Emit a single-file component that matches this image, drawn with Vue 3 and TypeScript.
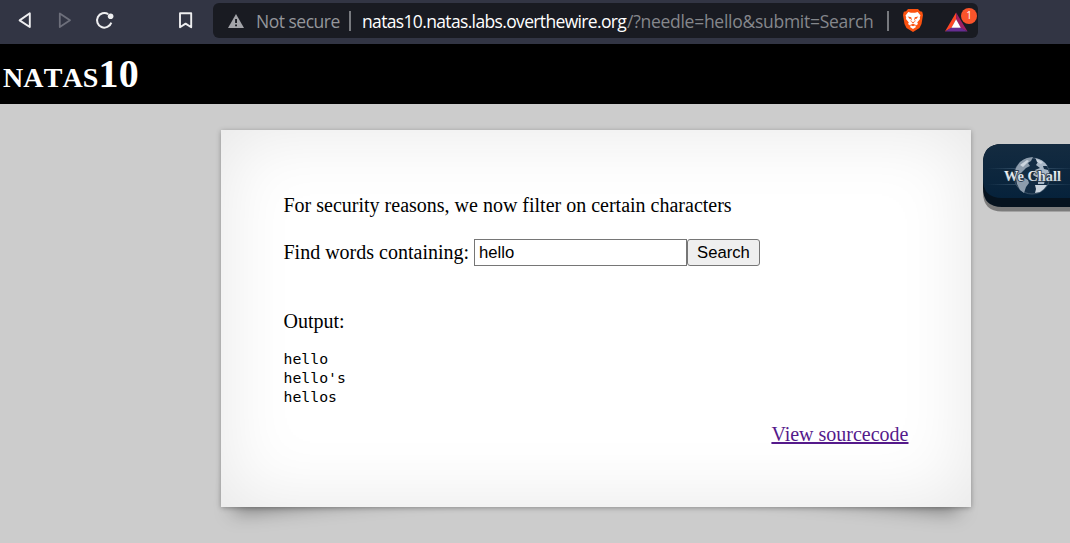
<script setup lang="ts">
import { ref } from 'vue'

const needle = ref('hello')
const results: string[] = ['hello', "hello's", 'hellos']
</script>

<template>
  <div class="window">
    <header class="toolbar">
      <svg class="nav" width="213" height="44" viewBox="0 0 213 44" fill="none">
        <path d="M29.8 13.2 V27 L19.6 20.4 Z" stroke="#eeeef0" stroke-width="1.9" stroke-linejoin="round" />
        <path d="M59.8 13.4 V27 L70 20.3 Z" stroke="#6d6f7b" stroke-width="1.8" stroke-linejoin="round" />
        <path d="M108.2 14.1 A7.3 7.3 0 1 0 111.3 22.6" stroke="#eeeef0" stroke-width="2" />
        <circle cx="110.6" cy="16.2" r="2.8" fill="#eeeef0" />
        <path d="M180 13.2 H191.2 V27.2 L185.6 23.6 L180 27.2 Z" stroke="#eeeef0" stroke-width="1.9" stroke-linejoin="round" />
      </svg>
      <div class="address">
        <svg class="warn" width="16" height="14" viewBox="0 0 16 14">
          <path d="M8 0 L16 14 H0 Z" fill="#a3a4a9" />
          <path d="M7.1 5 h1.9 v4 h-1.9z M7.1 10.5 h1.9 v1.7 h-1.9z" fill="#191b22" />
        </svg>
        <span class="insecure">Not secure</span>
        <i class="bar"></i>
        <span class="host">natas10.natas.labs.overthewire.org</span>
        <span class="query">/?needle=hello&amp;submit=Search</span>
        <i class="bar second"></i>
        <svg class="lion" width="20" height="23" viewBox="0 0 20 23">
          <path d="M5 0 H15 L17 2.2 L19.2 2.8 L20 6 L18.5 15 L16.5 19 L10 23 L3.5 19 L1.5 15 L0 6 L.8 2.8 L3 2.2Z" fill="#fb5210" />
          <path d="M5.3 3.1 L8 3.8 H12 L14.7 3.1 L17.5 6.5 L16.8 8.3 L17 10 L14.2 13.6 L15 15 L13 16.4 L11.8 16 L13 18 L10 20 L7 18 L8.2 16 L7 16.4 L5 15 L5.8 13.6 L3 10 L3.2 8.3 L2.5 6.5Z" fill="#fff" />
          <path d="M4.7 7.6 L8.2 8.3 L8.8 10.2 L8 12 L10 13.3 L12 12 L11.2 10.2 L11.8 8.3 L15.3 7.6 L13.2 10 L11.8 9.7 L12.5 12.1 L10 14.5 L7.5 12.1 L8.2 9.7 L6.8 10Z M7 16 L10 14.7 L13 16 L10 17.2Z" fill="#fb5210" />
        </svg>
        <span class="bat">
          <svg width="23" height="20" viewBox="0 0 24 20">
            <path d="M11.6 0 L0 20 L6.7 16.2 L11.6 7Z" fill="#ff4724" />
            <path d="M11.6 0 L23.5 20 L16.3 16.2 L11.6 7Z" fill="#9e1f63" />
            <path d="M0 20 H23.5 L16.3 15.7 H6.7Z" fill="#662d91" />
            <path d="M11.6 7 L16.5 16 H6.7Z" fill="#fff" />
          </svg>
          <b class="badge">1</b>
        </span>
      </div>
    </header>

    <h1>natas10</h1>

    <main>
      <section class="content">
        <p class="notice">For security reasons, we now filter on certain characters</p>
        <form class="search" @submit.prevent>
          <label for="needle">Find words containing:</label>
          <input id="needle" v-model="needle" type="text" />
          <button type="submit">Search</button>
        </form>
        <p class="output">Output:</p>
        <pre><span v-for="word in results" :key="word">{{ word }}</span></pre>
        <div class="source"><a href="#">View sourcecode</a></div>
      </section>
      <aside class="wechall">
        <svg width="88" height="68" viewBox="0 0 88 68">
          <defs>
            <linearGradient id="panel" x1="0" y1="0" x2="0" y2="1">
              <stop offset="0" stop-color="#142b40" />
              <stop offset="1" stop-color="#06223b" />
            </linearGradient>
            <linearGradient id="glow" x1="0" y1="0" x2="1" y2="0">
              <stop offset="0" stop-color="#54718a" stop-opacity="0" />
              <stop offset=".5" stop-color="#54718a" stop-opacity=".7" />
              <stop offset="1" stop-color="#54718a" stop-opacity=".1" />
            </linearGradient>
            <linearGradient id="letters" x1="0" y1="0" x2="0" y2="1">
              <stop offset="0" stop-color="#ffffff" />
              <stop offset="1" stop-color="#b9c6d2" />
            </linearGradient>
          </defs>
          <path d="M88 4 H20 Q1 4 1 23 V48 Q1 67.5 20 67.5 H88Z" fill="#7c7c7c" />
          <path d="M88 0 H20 Q1 0 1 19 V44 Q1 63 20 63 H88Z" fill="#06131f" />
          <path d="M88 0 H20 Q1 0 1 19 V35 Q1 54 20 54 H88Z" fill="url(#panel)" />
          <path d="M5 24 H88 V25 H5Z M5 40 H88 V41 H5Z" fill="url(#glow)" />
          <circle cx="50" cy="32" r="18" fill="#132c44" stroke="#4a6074" stroke-width=".8" />
          <path d="M34 24 Q38 16 45 14 L51 13 L49 17 L46 19 L48 22 L44 24 L41 27 L38 30 L41 33 L46 36 L47 39 L44 43 L42 49 L38 46 L35 40 L34 34 L32.5 29Z" fill="#8d9cac" />
          <path d="M53 14 Q61 15 65.5 22 L61 22 L62 25 L66 26 L68 31 L67 38 L63 36 L62 40 L56 40 L56 34 L51 31 L53 26 L58 24 L54 21 L56 18Z" fill="#a9b7c6" />
          <path d="M38 21 L45 16 L47 17 L41 23Z M54 15 L61 18 L59 20 L55 18Z" fill="#ccd5df" />
          <path d="M53 41 H65 Q62 46 58 48 L53 49 L54 45Z" fill="#ccd5df" />
          <text x="22" y="36.5" class="brand" textLength="57" lengthAdjust="spacingAndGlyphs">We Chall</text>
        </svg>
      </aside>
    </main>
  </div>
</template>

<style>
body { margin: 0; background: #ccc; overflow: hidden; }
</style>

<style scoped>
.window { width: 1070px; height: 543px; overflow: hidden; background: #ccc; font: 20px/23px "Liberation Serif", serif; color: #000; }
.toolbar { height: 44px; background: #323544; display: flex; align-items: flex-start; }
.nav { flex: none; }
.address { box-sizing: border-box; width: 765px; height: 35px; margin-top: 3px; border-radius: 6px; background: #191b22; display: flex; align-items: center; padding-left: 15px; font: 17.5px/35px "Open Sans", sans-serif; white-space: nowrap; }
.address > * { flex: none; }
.address > span:not(.bat) { padding-top: 1px; }
.warn { margin: 1px 12px 0 0; }
.insecure { width: 93px; color: #94969b; letter-spacing: -.5px; }
.bar { width: 2px; height: 20px; background: #77797e; }
.host { width: 265px; margin-left: 11px; color: #fff; letter-spacing: -.65px; }
.query { width: 246px; color: #85878c; letter-spacing: -.27px; }
.second { margin-left: 14px; }
.lion { margin-left: 14px; }
.bat { position: relative; height: 20px; margin: 2px 0 0 22px; line-height: 0; }
.badge { position: absolute; left: 16px; top: -3.5px; width: 16px; height: 16px; border-radius: 50%; background: #fb542b; color: #fff; font: 10px/15px "Open Sans", sans-serif; text-align: center; }
h1 { box-sizing: border-box; height: 60px; margin: 0; padding-left: 3px; background: #000; color: #fff; font: bold 40px/60px "Liberation Serif", serif; font-variant: small-caps; font-kerning: none; letter-spacing: .12px; }
main { display: flex; align-items: flex-start; padding: 26px 0 0 221px; isolation: isolate; }
.content { position: relative; box-sizing: border-box; flex: none; width: 750px; height: 377px; padding: 64px 62.5px 0; background: #fff; box-shadow: 0 1px 5px rgba(0,0,0,.3), 0 0 75px rgba(0,0,0,.1) inset; }
.content::before, .content::after { content: ""; position: absolute; z-index: -1; bottom: 17px; width: 525px; max-width: 250px; height: 125px; box-shadow: 0 10px 20px rgba(0,0,0,.4); }
.content::before { left: 27px; transform: skew(-15deg) rotate(-6deg); }
.content::after { right: 27px; transform: skew(15deg) rotate(6deg); }
.notice, .output { margin: 0; }
.search { display: flex; align-items: center; height: 27px; margin-top: 22px; }
.search label { width: 190.5px; }
input { box-sizing: border-box; width: 213px; height: 27px; border: 1px solid #767676; border-radius: 0; padding: 0 4px; outline: 0; background: #fff; font: 16.67px "Liberation Sans", sans-serif; }
button { box-sizing: border-box; width: 73px; height: 27px; border: 1px solid #767676; border-radius: 3px; padding: 0; background: #efefef; color: #000; font: 16.67px "Liberation Sans", sans-serif; }
.output { margin-top: 44px; }
pre { display: flex; flex-direction: column; margin: 16px 0 0; font: 14.8px/19px "DejaVu Sans Mono", monospace; }
.source { margin-top: 17px; text-align: right; }
.source a { color: #551a8b; text-decoration-thickness: 2px; text-underline-offset: 1px; }
.wechall { margin: 14px 0 0 11px; line-height: 0; }
.brand { font: bold 14px "Liberation Serif", serif; fill: url(#letters); stroke: #1b2c3c; stroke-width: 1.5px; paint-order: stroke; }
</style>
